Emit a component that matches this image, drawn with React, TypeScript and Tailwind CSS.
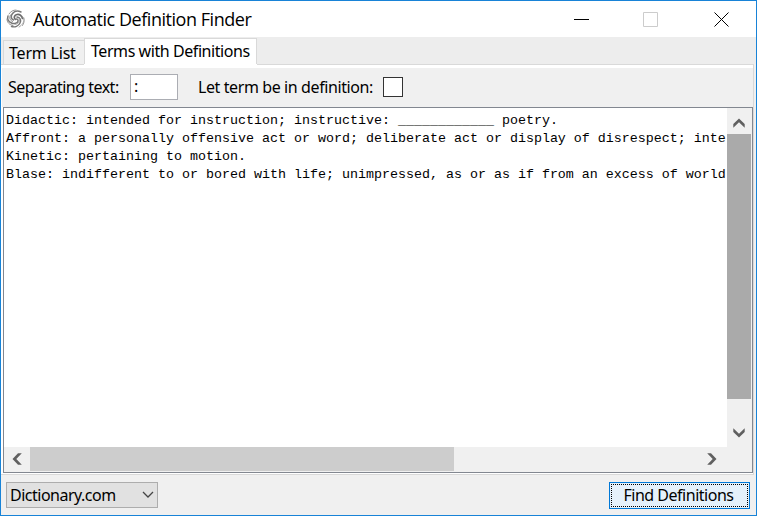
import React from "react";

const lines = [
  "Didactic: intended for instruction; instructive: ____________ poetry.",
  "Affront: a personally offensive act or word; deliberate act or display of disrespect; inte",
  "Kinetic: pertaining to motion.",
  "Blase: indifferent to or bored with life; unimpressed, as or as if from an excess of world",
];

function Chevron({ className }: { className: string }) {
  return (
    <svg className={className} width="12" height="10" viewBox="0 0 12 10" fill="#606060">
      <path d="M6 .5 11.700 6v3.800L6 4.300.3 9.800V6z" />
    </svg>
  );
}

function Swirl() {
  return (
    <svg width="21" height="22" viewBox="0 0 21 22" fill="none" stroke="#777" strokeLinecap="round">
      <path d="M10.500 11.500c1.500-1 3 0 2.500 1.800s-3.500 3-6.500 1.700S2 11 3 8" strokeWidth="1.500" />
      <path d="M10 11c-1.500-1.500-.5-4 2-4.500s5 1 5.500 4" strokeWidth="1.700" stroke="#6b6b6b" />
      <path d="M12 9c3 .5 4.500 3 3 6s-5 4.500-8.500 3.500" strokeWidth="1.500" />
      <path d="M8.500 12C6 11 5.500 8 7.500 5.500S13 2.500 16 4" strokeWidth="1.500" />
      <path d="M17 8c2.500 2.500 3 6 .5 9.500M4 6C5.500 3.500 8 2 11 2" stroke="#999" />
      <path d="M5.500 7c-1.500 3-.5 5.500 2 6.500M2 11c0 3.500 2.500 6 6 6.500" stroke="#8a8a8a" />
      <path d="M14.500 11c.5 3-1.500 5-4.500 5.500M19 10c.5 4-1.500 7-5 9" stroke="#aaa" />
    </svg>
  );
}

export default function App() {
  return (
    <div className="flex h-[516px] w-[757px] flex-col overflow-hidden border border-[#1883d7] bg-[#f0f0f0] font-['Noto_Sans',sans-serif] text-base text-black">
      <header className="flex h-9 shrink-0 items-center bg-white pl-1">
        <Swirl />
        <h1 className="ml-[7px] w-[218px] whitespace-nowrap pb-px font-['Open_Sans',sans-serif] text-[18px] leading-6 tracking-[-0.46px]">
          Automatic Definition Finder
        </h1>
        <div className="ml-auto flex items-center pr-[26px]">
          <svg width="156" height="16" viewBox="0 0 156 16" fill="none" strokeWidth="1">
            <path d="M0 8.500h15" stroke="#000" />
            <path d="M69.500 1.500h14v14h-14z" stroke="#ccc" />
            <path d="m140.500 1.500 14 14m0-14-14 14" stroke="#000" />
          </svg>
        </div>
      </header>

      <nav className="flex h-[27px] shrink-0 items-start bg-[#ededed] pl-0.5">
        <div className="mt-[3px] h-6 w-[81px] border border-r-0 border-b-0 border-[#d9d9d9] bg-[#f0f0f0] pl-[5px] leading-6 tracking-[-0.2px] whitespace-nowrap">
          Term List
        </div>
        <div className="mt-px h-[26px] w-[173px] border border-b-0 border-[#d9d9d9] bg-white pl-1.5 leading-[25px] tracking-[-0.43px] whitespace-nowrap">
          Terms with Definitions
        </div>
      </nav>

      <div className="flex h-[411px] w-[753px] shrink-0 flex-col border-r border-b border-[#d9d9d9] bg-white">
        <div className="flex h-1 shrink-0">
          <div className="w-[83px] border-t border-[#d9d9d9]" />
          <div className="w-[173px] border-x border-[#d9d9d9] border-x-white" />
          <div className="flex-1 border-t border-[#d9d9d9]" />
        </div>
        <section className="ml-px flex h-[39px] shrink-0 items-center bg-[#f0f0f0] pl-1.5">
          <label className="w-[122px] whitespace-nowrap pb-0.5 tracking-[-0.5px]">Separating text:</label>
          <div className="mb-px h-[26px] w-12 border border-[#abadb3] bg-white pl-[3px] leading-[23px]">:</div>
          <label className="ml-5 w-[185px] whitespace-nowrap pb-0.5 tracking-[-0.4px]">Let term be in definition:</label>
          <div className="mb-0.5 h-5 w-5 border border-[#333] bg-white" />
        </section>

        <main className="ml-0.5 flex h-[366px] w-[750px] shrink-0 flex-col border border-[#828790] bg-[#f0f0f0]">
          <div className="flex h-[339px]">
            <div className="w-[723px] overflow-hidden bg-white pt-1 pl-0.5 font-['Liberation_Mono',monospace] text-[13.333px] leading-[18px]">
              {lines.map((line) => (
                <div key={line} className="whitespace-pre">{line}</div>
              ))}
            </div>
            <div className="flex w-[25px] flex-col pr-px">
              <div className="flex h-[26px] items-center justify-center pt-[3px]"><Chevron className="" /></div>
              <div className="h-[265px] w-6 bg-[#aaa]" />
              <div className="flex flex-1 items-center justify-center pt-5"><Chevron className="rotate-180" /></div>
            </div>
          </div>
          <div className="flex h-6 w-[723px]">
            <div className="flex w-[26px] items-center justify-center"><Chevron className="-rotate-90" /></div>
            <div className="w-[424px] bg-[#cdcdcd]" />
            <div className="flex flex-1 items-center justify-end pr-[9px]"><Chevron className="rotate-90" /></div>
          </div>
        </main>
      </div>

      <footer className="flex flex-1 items-start justify-between pt-[7px] pr-1.5 pl-[5px]">
        <div className="flex h-[26px] w-[152px] items-center justify-between border border-[#adadad] bg-[#e1e1e1] px-[3px]">
          <span className="whitespace-nowrap tracking-[-0.5px]">Dictionary.com</span>
          <svg width="12" height="8" viewBox="0 0 12 8" fill="none" stroke="#444" strokeWidth="1.3">
            <path d="m1 1 5 5 5-5" />
          </svg>
        </div>
        <button className="h-[27px] w-[141px] border border-[#0078d7] bg-[#e5f1fb] p-px">
          <span className="flex h-full items-center justify-center border border-dotted border-black pr-0.5 pb-0.5 tracking-[-0.48px] whitespace-nowrap">
            Find Definitions
          </span>
        </button>
      </footer>
    </div>
  );
}
